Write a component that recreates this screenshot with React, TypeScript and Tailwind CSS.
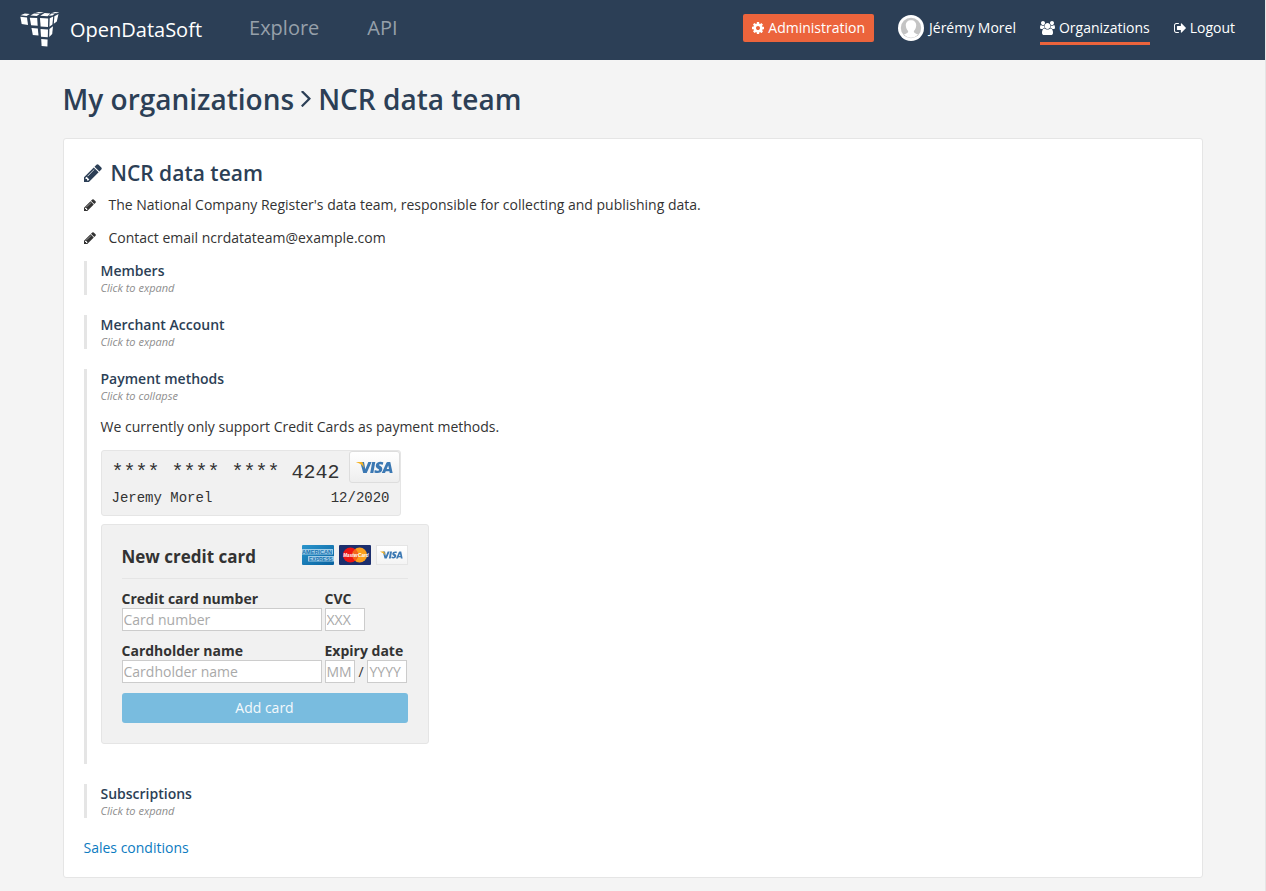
import type { ReactNode } from "react";

const PATHS = {
  cog: "M1152 896q0-106-75-181t-181-75-181 75-75 181 75 181 181 75 181-75 75-181zm512-109v222q0 12-8 23t-20 13l-185 28q-19 54-39 91 35 50 107 138 10 12 10 25t-9 23q-27 37-99 108t-94 71q-12 0-26-9l-138-108q-44 23-91 38-16 136-29 186-7 28-36 28h-222q-14 0-24.5-8.5t-11.5-21.5l-28-184q-49-16-90-37l-141 107q-10 9-25 9-14 0-25-11-126-114-165-168-7-10-7-23 0-12 8-23 15-21 51-66.5t54-70.5q-27-50-41-99l-183-27q-13-2-21-12.5t-8-23.5v-222q0-12 8-23t19-13l186-28q14-46 39-92-40-57-107-138-10-12-10-24 0-10 9-23 26-36 98.5-107.5t94.5-71.5q13 0 26 10l138 107q44-23 91-38 16-136 29-186 7-28 36-28h222q14 0 24.5 8.5t11.5 21.5l28 184q49 16 90 37l142-107q9-9 24-9 13 0 25 10 129 119 165 170 7 8 7 22 0 12-8 23-15 21-51 66.5t-54 70.5q26 50 41 98l183 28q13 2 21 12.5t8 23.5z",
  pencil: "M491 1536l91-91-235-235-91 91v107h128v128h107zm523-928q0-22-22-22-10 0-17 7l-542 542q-7 7-7 17 0 22 22 22 10 0 17-7l542-542q7-7 7-17zm-54-192l416 416-832 832h-416v-416zm683 96q0 53-37 90l-166 166-416-416 166-165q36-38 90-38 53 0 91 38l235 234q37 39 37 91z",
  signOut: "M704 1440q0 4 1 20t.5 26.5-3 23.5-10 19.5-20.5 6.5h-320q-119 0-203.5-84.5t-84.5-203.5v-704q0-119 84.5-203.5t203.5-84.5h320q13 0 22.5 9.5t9.5 22.5q0 4 1 20t.5 26.5-3 23.5-10 19.5-20.5 6.5h-320q-66 0-113 47t-47 113v704q0 66 47 113t113 47h312l11.5 1 11.5 3 8 5.5 7 9 2 13.5zm928-544q0 26-19 45l-544 544q-19 19-45 19t-45-19-19-45v-288h-448q-26 0-45-19t-19-45v-384q0-26 19-45t45-19h448v-288q0-26 19-45t45-19 45 19l544 544q19 19 19 45z",
  users: "M529 896q-162 5-265 128h-134q-82 0-138-40.5t-56-118.5q0-353 124-353 6 0 43.5 21t97.5 42.5 119 21.5q67 0 133-23-5 37-5 66 0 139 81 256zm1071 637q0 120-73 189.5t-194 69.5h-874q-121 0-194-69.5t-73-189.5q0-53 3.5-103.5t14-109 26.5-108.5 43-97.5 62-81 85.5-53.5 111.5-20q10 0 43 21.5t73 48 107 48 135 21.5 135-21.5 107-48 73-48 43-21.5q61 0 111.5 20t85.5 53.5 62 81 43 97.5 26.5 108.5 14 109 3.5 103.5zm-1024-1277q0 106-75 181t-181 75-181-75-75-181 75-181 181-75 181 75 75 181zm704 384q0 159-112.5 271.5t-271.5 112.5-271.5-112.5-112.5-271.5 112.5-271.5 271.5-112.5 271.5 112.5 112.5 271.5zm576 225q0 78-56 118.5t-138 40.5h-134q-103-123-265-128 81-117 81-256 0-29-5-66 66 23 133 23 59 0 119-21.5t97.5-42.5 43.5-21q124 0 124 353zm-128-609q0 106-75 181t-181 75-181-75-75-181 75-181 181-75 181 75 75 181z",
  angle: "M1171 960q0 13-10 23l-466 466q-10 10-23 10t-23-10l-50-50q-10-10-10-23t10-23l393-393-393-393q-10-10-10-23t10-23l50-50q10-10 23-10t23 10l466 466q10 10 10 23z",
};

function Icon({ name, box, className }: { name: keyof typeof PATHS; box: string; className: string }) {
  return (
    <svg viewBox={box} className={"shrink-0 " + className} fill="currentColor" aria-hidden="true">
      <path d={PATHS[name]} />
    </svg>
  );
}

function Logo() {
  return (
    <svg viewBox="0 0 40 36" className="h-9 w-10 shrink-0" fill="#fff" aria-hidden="true">
      <path d="M.5 3.2 4.8 1.6 9.8 2 6.6 4z" />
      <path d="M10.3 3.5 14 1.4 20 1.7 16.8 3.9z" />
      <path d="M20.2 3.7 24.6 1.1 30.4 1.4 27.6 4.3z" />
      <path d="M15.4.9 18.8.1 24 .6 20.8 1.3z" />
      <path d="M28.8 3.7 31.5 1.5 35 1.5 32.4 3.4z" />
      <path d="M32 .9 35 .1 39.4.4 36.6 1.2z" />
      <path d="M.3 4.8 7 5.5 8 12.9 1.7 12.1z" />
      <path d="M9.8 5.7 17.2 6.1 17.7 13.8 11.1 13.2z" />
      <path d="M20 6.1 28.2 6.6 28 15 20.6 14.5z" />
      <path d="M29.7 6.3 33.2 4.5 32.4 12.5 29.4 14.8z" />
      <path d="M34.4 4.2 38.5 2 36.8 9.5 33.8 11.8z" />
      <path d="M11.5 16 17.8 16.6 18.5 23.6 12.8 22.9z" />
      <path d="M20.5 17.1 28 17.6 27.8 25.2 21 24.7z" />
      <path d="M29.4 17 33 14.2 32.2 22 29.2 24.9z" />
      <path d="M21.2 27 27.6 27.6 27.4 34.6 21.6 34z" />
    </svg>
  );
}

function Avatar() {
  return (
    <svg viewBox="0 0 26 26" className="size-[26px] shrink-0" aria-hidden="true">
      <circle cx="13" cy="13" r="13" fill="#fff" />
      <circle cx="13" cy="13" r="10.2" fill="#c4c4c4" />
      <path d="M13 5.2c3.4 0 5.3 2.2 5.2 5.3-.1 2.500-1.200 4.300-2.300 5.500-.2 1.400.5 1.900 4.400 3.600A10.200 10.200 0 0 1 5.700 19.600c3.900-1.700 4.600-2.200 4.400-3.600-1.100-1.200-2.200-3-2.300-5.500C7.700 7.400 9.600 5.200 13 5.200z" fill="#fff" />
    </svg>
  );
}

function VisaMark({ className }: { className: string }) {
  return (
    <svg viewBox="0 0 37 13" className={className} role="img" aria-label="Visa">
      <g fill="#3b78b3">
        <path d="M4.200 1H8l1.300 7.200L12.300 1h3.300L10.700 12H7.200z" />
        <path d="M16.200 1h3.100l-2 11h-3.100z" />
        <path d="M27.300 1.300l-.5 2.500c-2-.9-3.700-.8-3.800 0 0 1.100 3.500 1.400 3.300 4.400-.2 3.500-4.300 4.700-8 3.300l.5-2.600c1.700 1 4.200 1.100 4.300.1.100-1.200-3.500-1.300-3.300-4.400.2-3.600 4.300-4.500 7.500-3.300z" />
        <path fillRule="evenodd" d="M31.700 1h2.600L36.600 12h-2.900l-.3-1.700h-3.600L29 12h-3.200l4.500-10.100Q30.700 1 31.700 1zm.5 3.500L30.700 8H33z" />
      </g>
      <path d="M.3 1h5.100q1.300 0 1.600 1.200L8.100 7Q6 3 .3 1.300z" fill="#f5b324" />
    </svg>
  );
}

function Amex() {
  return (
    <svg viewBox="0 0 32 20" className="h-5 w-8" role="img" aria-label="American Express">
      <defs>
        <linearGradient id="amex" x1="0" y1="0" x2="1" y2="1">
          <stop offset="0" stopColor="#2a95cc" />
          <stop offset="1" stopColor="#08619f" />
        </linearGradient>
      </defs>
      <rect width="32" height="20" rx="1" fill="url(#amex)" />
      <rect x="0" y="4" width="31" height="5.500" fill="#9fcde8" />
      <rect x="6" y="11" width="26" height="5.500" fill="#9fcde8" />
      <g fill="#1672b0" fontFamily="Liberation Sans, sans-serif" fontWeight="700" fontSize="5.600">
        <text x="0" y="8.800">AMERICAN</text>
        <text x="7" y="15.800" fontSize="5">EXPRESS</text>
      </g>
    </svg>
  );
}

function MasterCard() {
  return (
    <svg viewBox="0 0 32 20" className="h-5 w-8" role="img" aria-label="MasterCard">
      <rect width="32" height="20" rx="1" fill="#1c2f6e" />
      <circle cx="20.600" cy="10" r="7.500" fill="#fa9f1c" />
      <circle cx="11.400" cy="10" r="7.500" fill="#ee1414" />
      <path d="M16 4.100a7.500 7.500 0 0 1 0 11.800a7.500 7.500 0 0 1 0-11.800z" fill="#f4651c" />
      <text x="4.300" y="12" fill="#fff" fontFamily="Liberation Sans, sans-serif" fontWeight="700" fontStyle="italic" fontSize="4.600">
        MasterCard
      </text>
    </svg>
  );
}

function Section({ title, open, children }: { title: string; open?: boolean; children?: ReactNode }) {
  return (
    <section className="mb-5 border-l-3 border-[#e5e5e5] pl-[14px]">
      <button type="button" aria-expanded={!!open} className="block text-left">
        <span className="block leading-5 font-semibold text-[#2c3f56]">{title}</span>
        <span className="block text-[11px] leading-[14px] text-[#8d8d8d] italic">{open ? "Click to collapse" : "Click to expand"}</span>
      </button>
      {children}
    </section>
  );
}

const inputClass = "block h-[23px] border border-[#ccc] bg-white px-px text-sm text-[#333] placeholder:text-[#a9a9a9]";

export default function App() {
  return (
    <div className="min-h-screen border-r border-[#e5e5e5] bg-[#f4f4f4] pb-[13px] font-['Open_Sans',sans-serif] text-sm text-[#333]">
      <header className="flex h-[60px] items-center bg-[#2c3f56] pr-[30px] pl-5 text-white">
        <a href="#home" className="flex items-center text-xl">
          <Logo />
          <span className="ml-[10px]">OpenDataSoft</span>
        </a>
        <nav className="ml-[47px] flex gap-12 pb-1 text-xl text-[#96a0aa]">
          <a href="#explore">Explore</a>
          <a href="#api">API</a>
        </nav>
        <div className="ml-auto flex items-center gap-6 pb-1 font-medium">
          <a href="#admin" className="flex h-7 items-center gap-1 rounded-xs bg-[#ec643c] px-[9px]">
            <Icon name="cog" box="128 128 1536 1536" className="size-3" />
            Administration
          </a>
          <a href="#profile" className="flex items-center gap-[5px]">
            <Avatar />
            Jérémy Morel
          </a>
          <a href="#organizations" className="flex h-[34px] items-center gap-1 border-y-3 border-t-transparent border-b-[#ec643c]">
            <Icon name="users" box="-64 0 1920 1792" className="h-[14px] w-[15px]" />
            Organizations
          </a>
          <a href="#logout" className="flex items-center gap-1">
            <Icon name="signOut" box="64 256 1568 1280" className="h-[10px] w-3" />
            Logout
          </a>
        </div>
      </header>

      <main className="mx-auto w-full max-w-[1140px]">
        <h1 className="flex h-[78px] items-center text-[28px] font-semibold text-[#2c3f56]">
          My organizations
          <Icon name="angle" box="589 493 582 966" className="mx-[7px] h-4 w-[10px]" />
          NCR data team
        </h1>

        <div className="rounded-[3px] border border-[#e5e5e5] bg-white p-5 pb-[19px]">
          <h2 className="flex h-7 items-center gap-[9px] text-[21px] font-semibold text-[#2c3f56]">
            <Icon name="pencil" box="128 128 1536 1536" className="size-[18px]" />
            NCR data team
          </h2>
          <p className="mt-2 flex h-5 items-center gap-[13px]">
            <Icon name="pencil" box="128 128 1536 1536" className="size-3" />
            The National Company Register's data team, responsible for collecting and publishing data.
          </p>
          <p className="mt-[13px] mb-[13px] flex h-5 items-center gap-[13px]">
            <Icon name="pencil" box="128 128 1536 1536" className="size-3" />
            Contact email ncrdatateam@example.com
          </p>

          <Section title="Members" />
          <Section title="Merchant Account" />
          <Section title="Payment methods" open>
            <p className="mt-[14px] mb-[13px] leading-5">We currently only support Credit Cards as payment methods.</p>

            <div className="h-[66px] w-[300px] rounded-[3px] border border-[#e5e5e5] bg-[#f1f1f1] font-['Courier_New','Liberation_Mono',monospace]">
              <div className="flex justify-between pl-[10px]">
                <span className="pt-[10px] text-xl leading-6 whitespace-pre">**** **** **** 4242</span>
                <span className="flex h-8 w-[51px] items-center justify-center rounded-[3px] border border-[#ddd] bg-linear-to-b from-white to-[#eee]">
                  <VisaMark className="h-[13px] w-[37px]" />
                </span>
              </div>
              <div className="mt-[3px] flex justify-between px-[10px] text-sm leading-5">
                <span>Jeremy Morel</span>
                <span>12/2020</span>
              </div>
            </div>

            <form className="mt-2 h-[220px] w-[328px] rounded-[3px] border border-[#e5e5e5] bg-[#f1f1f1] px-5 pt-5" onSubmit={(e) => e.preventDefault()}>
              <div className="flex h-[34px] justify-between border-b border-[#e5e5e5]">
                <h3 className="text-[17px] leading-6 font-bold">New credit card</h3>
                <div className="flex gap-[5px]">
                  <Amex />
                  <MasterCard />
                  <span className="flex h-5 w-8 items-center justify-center border border-[#e5e5e5] bg-linear-to-b from-white to-[#f4f4f4]">
                    <VisaMark className="h-2 w-[23px]" />
                  </span>
                </div>
              </div>
              <div className="mt-[10px] flex gap-[3px] font-bold">
                <div>
                  <label htmlFor="number" className="block leading-[19px]">Credit card number</label>
                  <input id="number" placeholder="Card number" className={inputClass + " w-[200px] font-normal"} />
                </div>
                <div>
                  <label htmlFor="cvc" className="block leading-[19px]">CVC</label>
                  <input id="cvc" placeholder="XXX" className={inputClass + " w-10 font-normal"} />
                </div>
              </div>
              <div className="mt-[10px] flex gap-[3px] font-bold">
                <div>
                  <label htmlFor="holder" className="block leading-[19px]">Cardholder name</label>
                  <input id="holder" placeholder="Cardholder name" className={inputClass + " w-[200px] font-normal"} />
                </div>
                <div>
                  <label htmlFor="month" className="block leading-[19px]">Expiry date</label>
                  <div className="flex w-[83px] items-center justify-between font-normal">
                    <input id="month" placeholder="MM" className={inputClass + " w-[30px]"} />
                    /
                    <input aria-label="Expiry year" placeholder="YYYY" className={inputClass + " w-10"} />
                  </div>
                </div>
              </div>
              <button type="submit" className="mt-[10px] h-[30px] w-full rounded-[3px] bg-[#79bcdf] font-medium text-[#f4f9fc]">
                Add card
              </button>
            </form>
            <div className="h-5" />
          </Section>
          <Section title="Subscriptions" />
          <a href="#sales" className="block w-fit leading-5 text-[#0b7bc1]">Sales conditions</a>
        </div>
      </main>
    </div>
  );
}
